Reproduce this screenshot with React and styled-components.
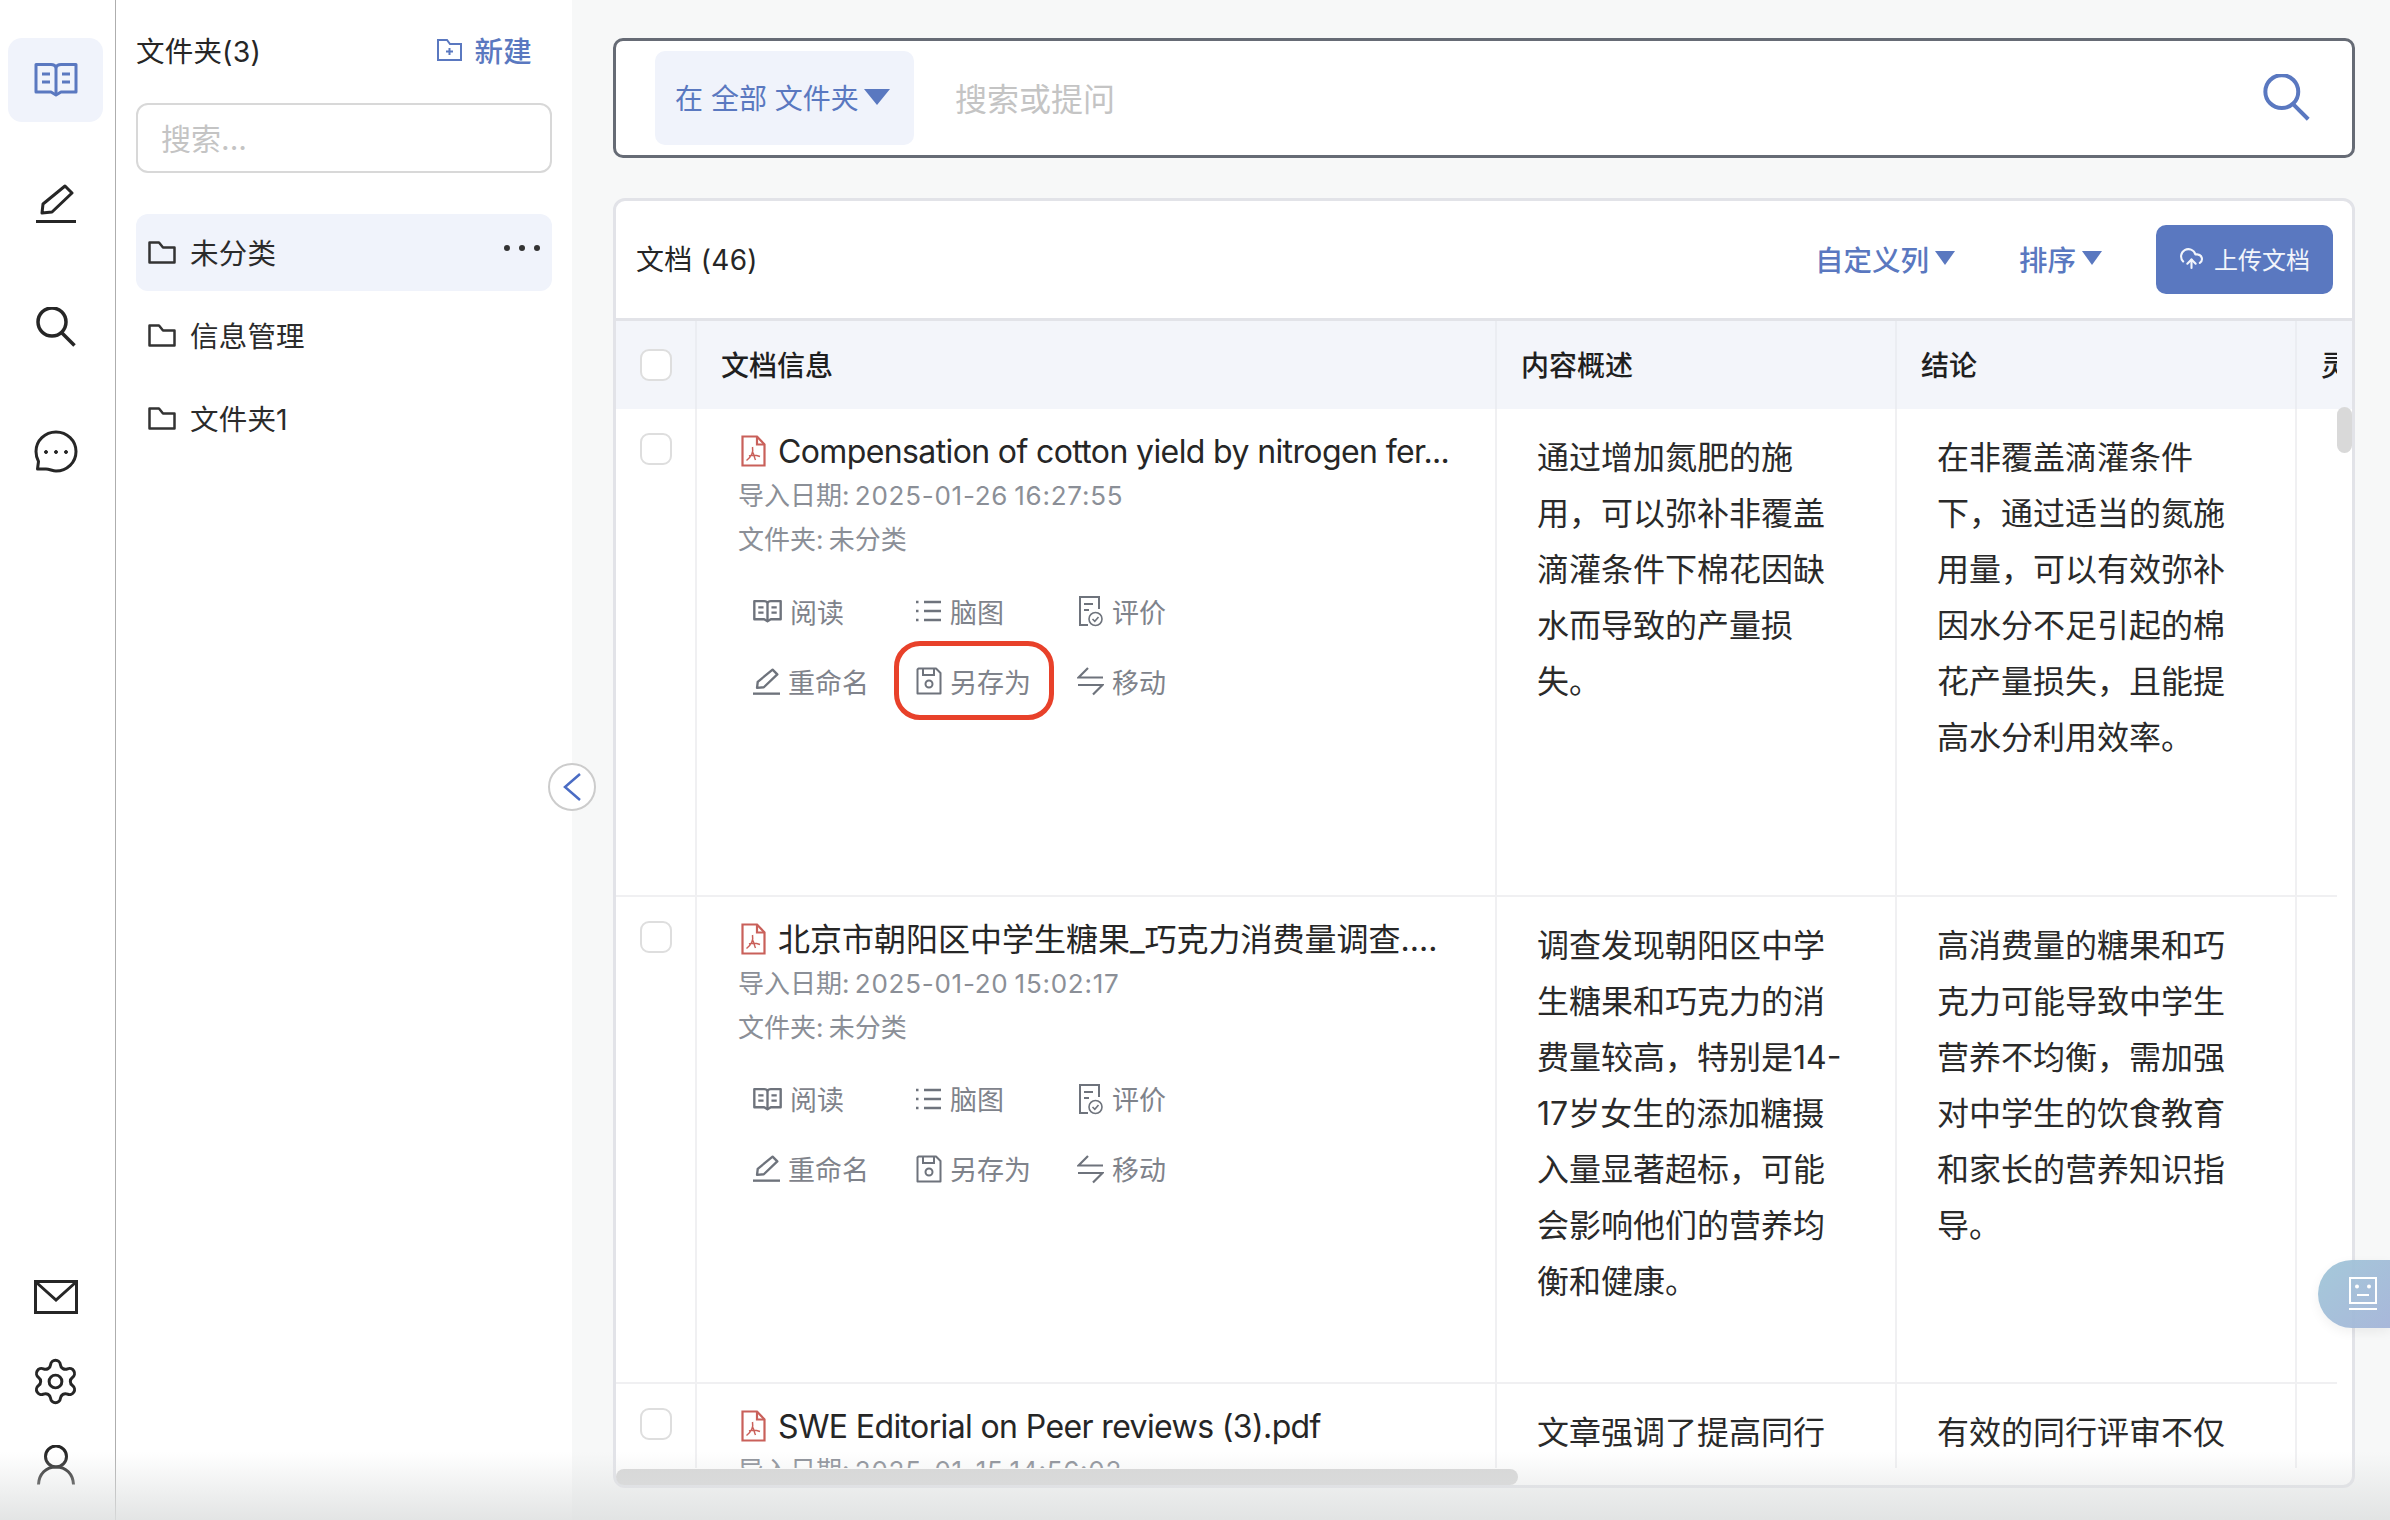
import React from "react"
import styled, { createGlobalStyle } from "styled-components"
import { Settings, CloudUpload } from "lucide-react"

const blue = "#5a78c0"
const paleBlue = "#f0f3fb"

const GlobalStyle = createGlobalStyle`
  html, body {
    margin: 0;
    padding: 0;
    background: #f7f8f8;
    color: #262626;
    font-family: Inter, "Noto Sans CJK SC", sans-serif;
  }
  *, *::before, *::after {
    box-sizing: border-box;
  }
`

const Page = styled.div`
  display: flex;
  position: relative;
  width: 2390px;
  height: 1520px;
  overflow: hidden;
`

const BottomShade = styled.div`
  position: absolute;
  left: 0;
  right: 0;
  bottom: 0;
  height: 68px;
  background: linear-gradient(rgba(222, 224, 224, 0), rgba(222, 224, 224, 0.85));
  pointer-events: none;
`

const Rail = styled.nav`
  display: flex;
  flex-direction: column;
  justify-content: space-between;
  flex: 0 0 116px;
  padding: 38px 12px 12px 8px;
  background: #fff;
  border-right: 1px solid #aeaeae;
`

const RailGroup = styled.div`
  display: flex;
  flex-direction: column;
  gap: ${props => props.$gap}px;
`

const RailButton = styled.div`
  display: flex;
  align-items: center;
  justify-content: center;
  height: 84px;
  padding-bottom: 2px;
  border-radius: 14px;
  background: ${props => (props.$active ? paleBlue : "transparent")};
  color: ${props => (props.$active ? blue : "#262626")};
`

const FolderPanel = styled.aside`
  position: relative;
  flex: 0 0 456px;
  padding: 28px 20px 0;
  background: #fff;
`

const FolderHeader = styled.div`
  display: flex;
  align-items: center;
  justify-content: space-between;
  height: 46px;
  padding: 0 20px 3px 0;
  font-size: 28.5px;
  letter-spacing: 0.2px;
`

const NewButton = styled.div`
  display: flex;
  align-items: center;
  gap: 13px;
  color: ${blue};
  font-weight: 500;
`

const FolderSearch = styled.div`
  display: flex;
  align-items: center;
  height: 70px;
  margin: 29px 0 41px;
  padding: 0 0 3px 23px;
  border: 2px solid #d8d8d8;
  border-radius: 12px;
  color: #c4c4c4;
  font-size: 30px;
`

const FolderList = styled.div`
  display: flex;
  flex-direction: column;
  gap: 6px;
`

const FolderItem = styled.div`
  display: flex;
  align-items: center;
  gap: 14px;
  height: 77px;
  padding: 0 12px 0 12px;
  border-radius: 12px;
  background: ${props => (props.$active ? paleBlue : "transparent")};
  color: #2b2b2b;
  font-size: 28.5px;
  letter-spacing: 0.2px;
`

const FolderName = styled.span`
  flex: 1;
  padding-bottom: 3px;
`

const MoreDots = styled.span`
  display: flex;
  gap: 9px;
  margin-bottom: 10px;

  i {
    width: 6px;
    height: 6px;
    border-radius: 50%;
    background: #333;
  }
`

const CollapseButton = styled.div`
  position: absolute;
  top: 763px;
  right: -24px;
  display: flex;
  align-items: center;
  justify-content: center;
  width: 48px;
  height: 48px;
  border: 2px solid #ccc;
  border-radius: 50%;
  background: #fff;
  color: #4a6cc4;
`

const Main = styled.main`
  flex: 1;
  display: flex;
  flex-direction: column;
  gap: 40px;
  min-width: 0;
  padding: 38px 35px 32px 41px;
`

const SearchBar = styled.div`
  display: flex;
  align-items: center;
  flex: 0 0 120px;
  padding: 0 41px 0 39px;
  border: 3px solid #666b75;
  border-radius: 10px;
  background: #fff;
`

const ScopePill = styled.div`
  display: flex;
  align-items: center;
  gap: 5px;
  width: 259px;
  height: 94px;
  padding: 0 0 3px 20px;
  border-radius: 10px;
  background: ${paleBlue};
  color: ${blue};
  font-size: 28px;
  white-space: pre;
`

const Caret = styled.span`
  display: inline-block;
  border-style: solid;
  border-width: ${props => props.$h}px ${props => props.$w / 2}px 0;
  border-color: ${blue} transparent transparent;
`

const SearchPlaceholder = styled.div`
  flex: 1;
  padding: 0 0 3px 41px;
  color: #c4c4c4;
  font-size: 32px;
`

const SearchAction = styled.span`
  display: flex;
  margin-bottom: 2px;
  color: ${blue};
`

const DocPanel = styled.section`
  position: relative;
  flex: 1;
  display: flex;
  flex-direction: column;
  min-height: 0;
  border: 3px solid #e2e3e8;
  border-radius: 12px;
  background: #fff;
`

const DocToolbar = styled.div`
  display: flex;
  align-items: center;
  flex: 0 0 120px;
  padding: 0 19px 0 20px;
  border-bottom: 3px solid #e2e3e8;
`

const DocCount = styled.div`
  flex: 1;
  padding-bottom: 3px;
  font-size: 28px;
  letter-spacing: 0.3px;
  color: #262626;
`

const ToolLink = styled.div`
  display: flex;
  align-items: center;
  gap: 6px;
  margin-right: ${props => props.$gap}px;
  padding-bottom: 3px;
  color: ${blue};
  font-size: 28.5px;
  font-weight: 500;
`

const UploadButton = styled.div`
  display: flex;
  align-items: center;
  gap: 10px;
  width: 177px;
  height: 69px;
  padding: 0 0 2px 23px;
  border-radius: 10px;
  background: ${blue};
  color: #f2f5fb;
  font-size: 24px;
`

const TableHead = styled.div`
  flex: 0 0 88px;
  padding-right: 15px;
  background: #f3f5fa;
`

const TableBody = styled.div`
  flex: 0 0 1059px;
  margin-right: 15px;
  overflow: hidden;
`

const Row = styled.div`
  display: grid;
  grid-template-columns: 79px 800px 400px 400px 400px;
  width: 1721px;
  height: ${props => props.$height}px;
  overflow: hidden;
  border-bottom: ${props => (props.$head ? "none" : "2px solid #f0f0f2")};
`

const Cell = styled.div`
  border-left: ${props => (props.$first ? "none" : `2px solid ${props.$head ? "#ebedf2" : "#f0f0f2"}`)};
`

const HeadCell = styled(Cell)`
  display: flex;
  align-items: center;
  padding: 0 0 3px 24px;
  font-size: 28px;
  font-weight: 500;
  color: #1f1f1f;
  white-space: nowrap;
`

const CheckCell = styled(Cell)`
  display: flex;
  justify-content: center;
  align-items: ${props => (props.$head ? "center" : "flex-start")};
  padding: ${props => (props.$head ? "0" : "24px")} 0 0 0;
`

const CheckBox = styled.span`
  display: block;
  width: 32px;
  height: 32px;
  border: 2.5px solid #dedede;
  border-radius: 9px;
  background: #fff;
`

const InfoCell = styled(Cell)`
  padding: 20px 0 0 41px;
`

const TitleLine = styled.div`
  display: flex;
  align-items: center;
  gap: 12px;
  height: 44px;
  margin-bottom: 1px;
  padding-left: 3px;
  font-size: 32px;
  color: #262626;
  white-space: nowrap;
`

const TitleText = styled.span`
  padding-bottom: ${props => (props.$latin ? "0" : "3px")};
  letter-spacing: ${props => (props.$latin ? "-0.62px" : "0")};
`

const MetaLine = styled.div`
  height: 44px;
  line-height: 44px;
  font-size: 26px;
  word-spacing: -2px;
  color: #8b8f97;
  white-space: nowrap;
`

const DateValue = styled.span`
  letter-spacing: 0.75px;
`

const Actions = styled.div`
  display: grid;
  grid-template-columns: repeat(3, 162px);
  grid-auto-rows: 70px;
  margin-top: 14px;
`

const ActionButton = styled.div`
  position: relative;
  display: flex;
  align-items: center;
  gap: 8px;
  padding-left: 15px;
  color: #7f838b;
  font-size: 27px;

  ${props =>
    props.$marked &&
    `&::after {
      content: "";
      position: absolute;
      top: -5px;
      left: -6px;
      width: 160px;
      height: 79px;
      border: 5px solid #e8412a;
      border-radius: 26px;
    }`}
`

const ActionIcon = styled.span`
  display: flex;
  align-items: center;
  justify-content: center;
  flex: 0 0 27px;
  color: #6e737c;
`

const TextCell = styled(Cell)`
  padding: 21px 42px 0 40px;
  font-size: 32px;
  line-height: 56px;
  color: #2a2a2a;
`

const VerticalThumb = styled.div`
  position: absolute;
  top: 206px;
  right: 0;
  width: 15px;
  height: 46px;
  border-radius: 8px;
  background: #d9d9d9;
`

const HorizontalThumb = styled.div`
  position: absolute;
  left: 0;
  bottom: 0;
  width: 902px;
  height: 16px;
  border-radius: 8px;
  background: #d6d6d6;
`

const BotTab = styled.div`
  position: absolute;
  top: 1260px;
  right: 0;
  display: flex;
  align-items: center;
  justify-content: flex-end;
  width: 72px;
  height: 68px;
  padding-right: 13px;
  border-radius: 34px 0 0 34px;
  background: linear-gradient(135deg, rgba(160, 198, 216, 0.95), rgba(164, 180, 216, 0.95));
  box-shadow: 0 4px 12px rgba(0, 0, 0, 0.06);
  color: #fff;
`

const BookIcon = ({ w = 44, h = 35, sw = 3 }) => (
  <svg width={w} height={h} viewBox="0 0 44 35" fill="none" stroke="currentColor" strokeWidth={sw}>
    <path d="M2 2.500H17Q21 2.500 22 5.500Q23 2.500 27 2.500H42V30H27L22 33L17 30H2Z" strokeLinejoin="round" />
    <path d="M22 6V32M8 12H16M8 20H16M28 12H36M28 20H36" />
  </svg>
)

const PencilIcon = ({ w = 40, h = 39, sw = 3 }) => (
  <svg width={w} height={h} viewBox="0 0 40 39" fill="none" stroke="currentColor" strokeWidth={sw}>
    <path d="M7 20L29 2L36 9L16 28L6 29Z" strokeLinejoin="round" />
    <path d="M0 37.500H40" />
  </svg>
)

const SearchIcon = ({ w = 40, h = 40, sw = 3.500 }) => (
  <svg width={w} height={h} viewBox="0 0 40 40" fill="none" stroke="currentColor" strokeWidth={sw}>
    <circle cx="16" cy="15" r="14" />
    <path d="M25 25L38.500 38.500" />
  </svg>
)

const ChatIcon = () => (
  <svg width="44" height="43" viewBox="0 0 44 43" fill="none" stroke="currentColor" strokeWidth="3">
    <path d="M22 2C33 2 42 10.500 42 21.500C42 32.500 33 41 22 41C18.500 41 15.500 39 12 39H3.500L4.500 31.500C2.800 28.500 2 25 2 21.500C2 10.500 11 2 22 2Z" strokeLinejoin="round" />
    <circle cx="12" cy="22" r="1.500" fill="currentColor" strokeWidth="1" />
    <circle cx="22" cy="22" r="1.500" fill="currentColor" strokeWidth="1" />
    <circle cx="32" cy="22" r="1.500" fill="currentColor" strokeWidth="1" />
  </svg>
)

const MailIcon = () => (
  <svg width="44" height="34" viewBox="0 0 44 34" fill="none" stroke="currentColor" strokeWidth="3">
    <rect x="1.500" y="1.500" width="41" height="31" />
    <path d="M3 3L22 20L41 3" />
  </svg>
)

const UserIcon = () => (
  <svg width="38" height="40" viewBox="0 0 38 40" fill="none" stroke="currentColor" strokeWidth="3">
    <ellipse cx="19" cy="11.500" rx="10.500" ry="10.500" />
    <path d="M1.500 39.500C2 29 9 22 19 22C29 22 36 29 36.500 39.500" />
  </svg>
)

const FolderIcon = () => (
  <svg width="28" height="23" viewBox="0 0 28 23" fill="none" stroke="#333" strokeWidth="2.500" style={{ flex: "0 0 28px" }}>
    <path d="M1.500 1.500H11L15 6.500H26.500V21.500H1.500Z" strokeLinejoin="round" />
  </svg>
)

const FolderPlusIcon = () => (
  <svg width="25" height="22" viewBox="0 0 25 22" fill="none" stroke="currentColor" strokeWidth="2">
    <path d="M1 1H10L13 5H24V21H1Z" />
    <path d="M12.500 9V16M9 12.500H16" />
  </svg>
)

const ChevronLeft = () => (
  <svg width="18" height="28" viewBox="0 0 18 28" fill="none" stroke="currentColor" strokeWidth="2.500">
    <path d="M17 1L2 14L17 27" />
  </svg>
)

const PdfIcon = () => (
  <svg width="25" height="32" viewBox="0 0 25 32" fill="none" stroke="#c9605a" strokeWidth="2.200" style={{ flex: "0 0 25px" }}>
    <path d="M1.500 1.500H16L23.500 9.500V30.500H1.500Z" />
    <path d="M16 1.500V9.500H23.500" />
    <path d="M11.500 12C12.500 17 10 22 5.500 25.500M8 21C12 19.500 15 20 19 21.500M11.500 17C13 19.500 13.500 23 14.500 25" strokeWidth="1.500" />
  </svg>
)

const ListIcon = () => (
  <svg width="27" height="26" viewBox="0 0 27 26" fill="none" stroke="currentColor" strokeWidth="2.500">
    <path d="M9 4H26M9 13H26M9 22H26" />
    <path d="M1 4H3.500M1 13H3.500M1 22H3.500" />
  </svg>
)

const ReviewIcon = () => (
  <svg width="25" height="32" viewBox="0 0 25 32" fill="none" stroke="currentColor" strokeWidth="2">
    <path d="M21 14V2H2V30H10" />
    <path d="M6 9H15M6 15H11" />
    <circle cx="17.500" cy="24" r="6.500" strokeWidth="1.600" />
    <path d="M14.500 24L16.800 26.300L20.500 22" strokeWidth="1.600" />
  </svg>
)

const SaveIcon = () => (
  <svg width="26" height="28" viewBox="0 0 26 28" fill="none" stroke="currentColor" strokeWidth="2">
    <path d="M2.500 1.500H20L24.500 6V26.500H1.500V2.500Z" strokeLinejoin="round" />
    <path d="M7 2V8H18V2" />
    <circle cx="13" cy="17" r="3.500" />
  </svg>
)

const MoveIcon = () => (
  <svg width="27" height="30" viewBox="0 0 27 30" fill="none" stroke="currentColor" strokeWidth="2.200">
    <path d="M11 2L1.500 11.500H26" />
    <path d="M1 19H25.500L16 28.500" />
  </svg>
)

const BotIcon = () => (
  <svg width="28" height="34" viewBox="0 0 28 34" fill="none" stroke="currentColor" strokeWidth="2">
    <rect x="1" y="1" width="26" height="25" />
    <circle cx="8" cy="9.500" r="2" fill="currentColor" stroke="none" />
    <circle cx="20" cy="9.500" r="2" fill="currentColor" stroke="none" />
    <path d="M8 18H20" />
    <path d="M0 32H28" />
  </svg>
)

const docs = [
  {
    title: "Compensation of cotton yield by nitrogen fer...",
    latin: true,
    date: "2025-01-26 16:27:55",
    marked: true,
    summary: "通过增加氮肥的施用，可以弥补非覆盖滴灌条件下棉花因缺水而导致的产量损失。",
    conclusion: "在非覆盖滴灌条件下，通过适当的氮施用量，可以有效弥补因水分不足引起的棉花产量损失，且能提高水分利用效率。",
  },
  {
    title: "北京市朝阳区中学生糖果_巧克力消费量调查....",
    date: "2025-01-20 15:02:17",
    summary: "调查发现朝阳区中学生糖果和巧克力的消费量较高，特别是14-\u200B17岁女生的添加糖摄入量显著超标，可能会影响他们的营养均衡和健康。",
    conclusion: "高消费量的糖果和巧克力可能导致中学生营养不均衡，需加强对中学生的饮食教育和家长的营养知识指导。",
  },
  {
    title: "SWE Editorial on Peer reviews (3).pdf",
    latin: true,
    date: "2025-01-15 14:56:02",
    partial: true,
    summary: "文章强调了提高同行",
    conclusion: "有效的同行评审不仅",
  },
]

const DocActions = ({ marked }) => (
  <Actions>
    <ActionButton>
      <ActionIcon>
        <BookIcon w={29} h={24} sw={3.600} />
      </ActionIcon>
      阅读
    </ActionButton>
    <ActionButton>
      <ActionIcon>
        <ListIcon />
      </ActionIcon>
      脑图
    </ActionButton>
    <ActionButton>
      <ActionIcon>
        <ReviewIcon />
      </ActionIcon>
      评价
    </ActionButton>
    <ActionButton>
      <ActionIcon>
        <PencilIcon w={27} h={27} sw={3.500} />
      </ActionIcon>
      重命名
    </ActionButton>
    <ActionButton $marked={marked}>
      <ActionIcon>
        <SaveIcon />
      </ActionIcon>
      另存为
    </ActionButton>
    <ActionButton>
      <ActionIcon>
        <MoveIcon />
      </ActionIcon>
      移动
    </ActionButton>
  </Actions>
)

const DocRow = ({ doc }) => (
  <Row $height={487.5}>
    <CheckCell $first>
      <CheckBox />
    </CheckCell>
    <InfoCell>
      <TitleLine>
        <PdfIcon />
        <TitleText $latin={doc.latin}>{doc.title}</TitleText>
      </TitleLine>
      <MetaLine>
        导入日期: <DateValue>{doc.date}</DateValue>
      </MetaLine>
      {!doc.partial && <MetaLine>文件夹: 未分类</MetaLine>}
      {!doc.partial && <DocActions marked={doc.marked} />}
    </InfoCell>
    <TextCell>{doc.summary}</TextCell>
    <TextCell>{doc.conclusion}</TextCell>
    <TextCell />
  </Row>
)

const App = () => {
  return (
    <Page>
      <GlobalStyle />
      <Rail>
        <RailGroup $gap={40}>
          <RailButton $active>
            <BookIcon />
          </RailButton>
          <RailButton>
            <PencilIcon />
          </RailButton>
          <RailButton>
            <SearchIcon />
          </RailButton>
          <RailButton>
            <ChatIcon />
          </RailButton>
        </RailGroup>
        <RailGroup $gap={0}>
          <RailButton>
            <MailIcon />
          </RailButton>
          <RailButton>
            <Settings size={51} strokeWidth={1.400} />
          </RailButton>
          <RailButton>
            <UserIcon />
          </RailButton>
        </RailGroup>
      </Rail>

      <FolderPanel>
        <FolderHeader>
          <span>文件夹(3)</span>
          <NewButton>
            <FolderPlusIcon />
            新建
          </NewButton>
        </FolderHeader>
        <FolderSearch>搜索...</FolderSearch>
        <FolderList>
          <FolderItem $active>
            <FolderIcon />
            <FolderName>未分类</FolderName>
            <MoreDots>
              <i />
              <i />
              <i />
            </MoreDots>
          </FolderItem>
          <FolderItem>
            <FolderIcon />
            <FolderName>信息管理</FolderName>
          </FolderItem>
          <FolderItem>
            <FolderIcon />
            <FolderName>文件夹1</FolderName>
          </FolderItem>
        </FolderList>
        <CollapseButton>
          <ChevronLeft />
        </CollapseButton>
      </FolderPanel>

      <Main>
        <SearchBar>
          <ScopePill>
            在 全部 文件夹
            <Caret $w={26} $h={16} />
          </ScopePill>
          <SearchPlaceholder>搜索或提问</SearchPlaceholder>
          <SearchAction>
            <SearchIcon w={49} h={47} sw={3.400} />
          </SearchAction>
        </SearchBar>

        <DocPanel>
          <DocToolbar>
            <DocCount>文档 (46)</DocCount>
            <ToolLink $gap={64}>
              自定义列
              <Caret $w={21} $h={14} />
            </ToolLink>
            <ToolLink $gap={54}>
              排序
              <Caret $w={21} $h={14} />
            </ToolLink>
            <UploadButton>
              <CloudUpload size={25} strokeWidth={2} />
              上传文档
            </UploadButton>
          </DocToolbar>
          <TableHead>
            <Row $head $height={88}>
              <CheckCell $first $head>
                <CheckBox />
              </CheckCell>
              <HeadCell $head>文档信息</HeadCell>
              <HeadCell $head>内容概述</HeadCell>
              <HeadCell $head>结论</HeadCell>
              <HeadCell $head>灵感</HeadCell>
            </Row>
          </TableHead>
          <TableBody>
            {docs.map(doc => (
              <DocRow key={doc.date} doc={doc} />
            ))}
          </TableBody>
          <VerticalThumb />
          <HorizontalThumb />
        </DocPanel>
      </Main>

      <BotTab>
        <BotIcon />
      </BotTab>
      <BottomShade />
    </Page>
  )
}

export default App
